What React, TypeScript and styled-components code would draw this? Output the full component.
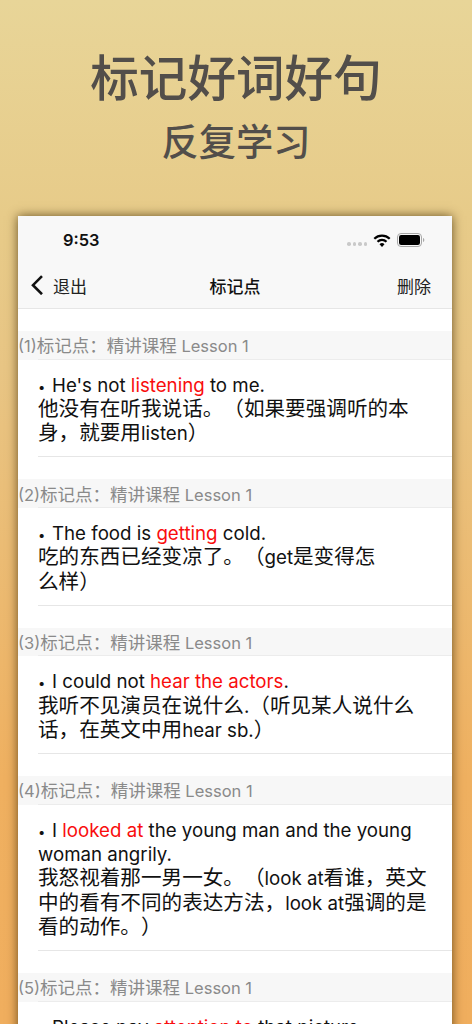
import React from 'react';
import styled, { createGlobalStyle } from 'styled-components';

const GlobalStyle = createGlobalStyle`
  html, body {
    margin: 0;
    padding: 0;
    height: 1024px;
    overflow: hidden;
  }
  body {
    font-family: Inter, "Noto Sans CJK SC", sans-serif;
    text-spacing-trim: space-all;
  }
`;

const Page = styled.div`
  width: 472px;
  height: 1024px;
  overflow: hidden;
  background: linear-gradient(180deg, #e8d598 0%, #e7cb89 21%, #e8c584 36%, #efb060 76%, #f0ae5e 100%);
  display: flex;
  flex-direction: column;
  align-items: center;
`;

const Headline = styled.h1`
  margin: 42px 0 0;
  font-family: "Noto Sans CJK SC", sans-serif;
  font-size: 48.6px;
  line-height: 66px;
  font-weight: 500;
  color: #524e4a;
`;

const SubHeadline = styled.h2`
  margin: 6px 0 0;
  font-family: "Noto Sans CJK SC", sans-serif;
  font-size: 37.2px;
  line-height: 52px;
  font-weight: 500;
  color: #524e4a;
`;

const Phone = styled.div`
  margin-top: 50px;
  margin-left: 18px;
  align-self: flex-start;
  width: 434px;
  flex: 1;
  background: #fff;
  box-shadow: 0 0 10px rgba(60, 40, 0, 0.75);
`;

const TopBars = styled.div`
  background: #f8f8f8;
  border-bottom: 1px solid #e6e6e6;
`;

const StatusBar = styled.div`
  height: 48px;
  padding: 0 27px 0 45px;
  display: flex;
  align-items: center;
  justify-content: space-between;
`;

const Clock = styled.span`
  font-size: 16.4px;
  font-weight: 600;
  color: #111;
`;

const StatusIcons = styled.div`
  display: flex;
  align-items: center;
  gap: 6px;
`;

const Signal = styled.div`
  display: flex;
  gap: 2px;
  margin-top: 8px;
`;

const SignalDot = styled.i`
  width: 3.5px;
  height: 3.5px;
  border-radius: 50%;
  background: #c9c9c9;
`;

const NavBar = styled.div`
  height: 44px;
  padding: 0 21px 2px 12px;
  box-sizing: border-box;
  display: flex;
  align-items: center;
  justify-content: space-between;
  position: relative;
`;

const NavBack = styled.div`
  display: flex;
  align-items: center;
  gap: 9px;
  font-size: 17px;
  color: #222;
`;

const NavTitle = styled.div`
  position: absolute;
  left: 0;
  right: 0;
  text-align: center;
  font-size: 17px;
  font-weight: 500;
  color: #111;
  pointer-events: none;
`;

const NavAction = styled.div`
  font-size: 17px;
  color: #222;
`;

const List = styled.div`
  padding-top: 22px;
`;

const Section = styled.section`
  margin-bottom: 21.9px;
`;

const Han = styled.span`
  font-family: "Noto Sans CJK SC", sans-serif;
  font-size: 20.6px;
`;

const SectionHeader = styled.div`
  height: 28.6px;
  box-sizing: border-box;
  background: #f7f7f7;
  position: relative;
  display: flex;
  align-items: center;
  font-size: 16.5px;
  color: #8a8a8a;
  white-space: nowrap;
  ${Han} {
    font-size: 17.5px;
  }
  &::after {
    content: '';
    position: absolute;
    left: 20px;
    right: 0;
    bottom: 0;
    height: 1px;
    background: #ececec;
  }
`;

const HeaderText = styled.div`
  height: 24px;
  line-height: 24px;
`;

const Row = styled.div`
  margin-left: 20px;
  padding: 11px 0 12.7px;
  border-bottom: 1px solid #e6e6e6;
  font-size: 18.7px;
  line-height: 24.4px;
  color: #111;
`;

// the zero width strut keeps latin-only lines on the same baseline as CJK ones
const Line = styled.div`
  height: 24.4px;
  white-space: nowrap;
  &::before {
    content: '\\200b';
    font-family: "Noto Sans CJK SC", sans-serif;
    font-size: 20.6px;
  }
`;

const Bullet = styled.span`
  display: inline-block;
  width: 14px;
  box-sizing: border-box;
  font-size: 13px;
`;

const Mark = styled.span`
  color: #f90d0d;
`;

// CJK runs are set bigger than the latin ones, as the system font does
const mixed = (text: string) =>
  text.split(/([\u3000-\u303f\u4e00-\u9fff\uff00-\uffef]+)/).map((part, i) =>
    i % 2 ? <Han key={i}>{part}</Han> : part,
  );

const sections: React.ReactNode[][] = [
  [
    <><Bullet>•</Bullet>He's not <Mark>listening</Mark> to me.</>,
    mixed('他没有在听我说话。（如果要强调听的本'),
    mixed('身，就要用listen）'),
  ],
  [
    <><Bullet>•</Bullet>The food is <Mark>getting</Mark> cold.</>,
    mixed('吃的东西已经变凉了。（get是变得怎'),
    mixed('么样）'),
  ],
  [
    <><Bullet>•</Bullet>I could not <Mark>hear the actors</Mark>.</>,
    mixed('我听不见演员在说什么.（听见某人说什么'),
    mixed('话，在英文中用hear sb.）'),
  ],
  [
    <><Bullet>•</Bullet>I <Mark>looked at</Mark> the young man and the young</>,
    'woman angrily.',
    mixed('我怒视着那一男一女。（look at看谁，英文'),
    mixed('中的看有不同的表达方法，look at强调的是'),
    mixed('看的动作。）'),
  ],
  [
    <><Bullet>•</Bullet>Please pay <Mark>attention to</Mark> that picture.</>,
  ],
];

export default function App() {
  return (
    <Page>
      <GlobalStyle />
      <Headline>标记好词好句</Headline>
      <SubHeadline>反复学习</SubHeadline>
      <Phone>
        <TopBars>
          <StatusBar>
            <Clock>9:53</Clock>
            <StatusIcons>
              <Signal>
                <SignalDot />
                <SignalDot />
                <SignalDot />
                <SignalDot />
              </Signal>
              <svg width="18" height="13" viewBox="0 0 18 13">
                <path d="M1.300 4.700A11 11 0 0 1 16.700 4.700" fill="none" stroke="#000" strokeWidth="2.200" />
                <path d="M4.500 7.800A6.400 6.400 0 0 1 13.500 7.800" fill="none" stroke="#000" strokeWidth="2.200" />
                <path d="M9 12.900 6.500 10.200A3.500 3.500 0 0 1 11.500 10.200Z" fill="#000" />
              </svg>
              <svg width="28" height="14" viewBox="0 0 28 14">
                <rect x="0.500" y="0.500" width="24" height="13" rx="3.500" fill="none" stroke="#a8a8a8" />
                <rect x="2" y="2" width="21" height="10" rx="2.200" fill="#000" />
                <path d="M26 5v4c.8-.3 1.300-1.100 1.300-2s-.5-1.700-1.300-2z" fill="#a8a8a8" />
              </svg>
            </StatusIcons>
          </StatusBar>
          <NavBar>
            <NavBack>
              <svg width="14" height="20" viewBox="0 0 14 20">
                <path d="M12 1.200 3 10.200l9 9" fill="none" stroke="#111" strokeWidth="2.600" />
              </svg>
              退出
            </NavBack>
            <NavTitle>标记点</NavTitle>
            <NavAction>删除</NavAction>
          </NavBar>
        </TopBars>
        <List>
          {sections.map((lines, i) => (
            <Section key={i}>
              <SectionHeader>
                <HeaderText>{mixed(`(${i + 1})标记点：精讲课程 Lesson 1`)}</HeaderText>
              </SectionHeader>
              <Row>
                {lines.map((line, j) => (
                  <Line key={j}>{line}</Line>
                ))}
              </Row>
            </Section>
          ))}
        </List>
      </Phone>
    </Page>
  );
}
